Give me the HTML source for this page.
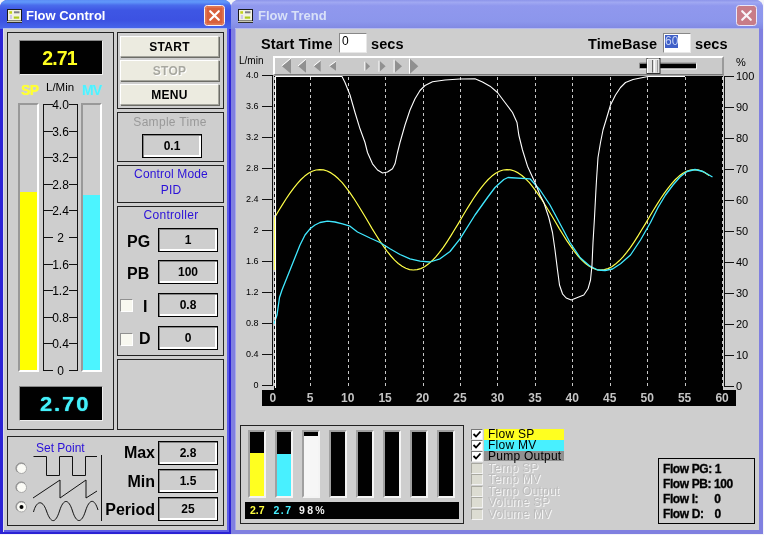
<!DOCTYPE html>
<html><head><meta charset="utf-8"><title>Flow Control</title>
<style>
*{box-sizing:border-box;margin:0;padding:0}
html,body{width:764px;height:535px;overflow:hidden;background:#f4f4f8;font-family:"Liberation Sans",sans-serif;font-size:13px;color:#000}
.a{position:absolute}
.win{position:absolute;top:0;height:535px;background:#cecece;border-radius:8px 8px 0 0}
#w1{left:0;width:231px;height:534px;border:3px solid #2b22d4;border-top:none;border-right-width:2px;border-bottom-width:2px;box-shadow:inset 1px 0 0 #dcdcec,inset -2px -2px 0 #5c5ce6}
#w2{left:231px;width:532px;height:534px;border:4px solid #8080e0;border-top:none;box-shadow:inset 1px 0 0 #a8a8ec}
.tb{position:absolute;left:0;top:0;height:29px}
#t1{width:231px;background:linear-gradient(#5c8ef6 0,#6098fa 7%,#4a6cec 18%,#3e56e4 36%,#3c52e2 70%,#4460e8 90%,#4868ec 100%);border-radius:7px 7px 0 0}
#t2{left:231px;width:532px;background:linear-gradient(#8c94ea 0,#a0a8f2 8%,#9098ee 20%,#8c96ec 75%,#8088e2 100%);border-radius:7px 7px 0 0}
.ttl{position:absolute;top:8px;font-weight:bold;font-size:13px;color:#fff;letter-spacing:0}
.panel{position:absolute;border:1px solid #222;background:#cecece}
.btn{position:absolute;left:120px;width:99px;height:21px;background:#ecebe0;border:1px solid #fff;border-right-color:#a4a49c;border-bottom-color:#a4a49c;box-shadow:1px 1px 0 #6c6c66;font-weight:bold;font-size:12px;text-align:center;line-height:21px;letter-spacing:0.3px}
.fld{position:absolute;height:24px;border:1px solid #000;box-shadow:inset 1px 1px 0 #858585,inset -2px -2px 0 #fff;background:#cecece;font-weight:bold;font-size:12px;text-align:center;line-height:22px}
.blue{color:#2a10d8}
.lbl{position:absolute;font-size:16px;font-weight:bold;line-height:20px}
.cb{position:absolute;width:13px;height:13px;background:#f8f8f0;border:1px solid #909090;border-right-color:#fff;border-bottom-color:#fff}
.tick{position:absolute;font-size:12px;line-height:12px}
.bar{position:absolute;top:430px;width:18px;height:68px;border:2px solid #f4f4f4;border-top-color:#a0a0a0;border-left-color:#a0a0a0;background:#000}
.ck{position:absolute;left:471px;width:12px;height:11px;background:#fff;border:1px solid #777;border-right-color:#eee;border-bottom-color:#eee}
.ckd{position:absolute;left:471px;width:12px;height:11px;background:#dcdcd2;border:1px solid #a8a8a0;border-right-color:#f2f2f2;border-bottom-color:#f2f2f2}
.cl{position:absolute;left:484px;font-size:12px;line-height:11px;height:11px;padding-left:4px;letter-spacing:0.25px}
.cld{color:#bdbdbd;text-shadow:1px 1px 0 #f6f6f6}
.info{position:absolute;left:663px;font-weight:bold;font-size:12px;line-height:13px;letter-spacing:-0.4px;-webkit-text-stroke:0.3px #000}
#root{position:absolute;left:0;top:0;width:764px;height:535px;will-change:transform;opacity:0.999}
</style></head><body><div id="root">
<div class="win" id="w1"></div>
<div class="win" id="w2"></div>
<div class="tb" id="t1"></div>
<div class="tb" id="t2"></div>

<!-- title 1 -->
<svg class="a" style="left:7px;top:9px" width="15" height="14" viewBox="0 0 15 14"><rect x="0.5" y="0.5" width="14" height="11.500" fill="#f2f2e2" stroke="#181818"/><rect x="2.300" y="2.200" width="2.700" height="2.500" fill="#c4d418"/><rect x="7" y="2.300" width="5.500" height="2" fill="#808088"/><rect x="2.800" y="6" width="2.200" height="4" fill="#cfc8ea"/><rect x="6.800" y="7.500" width="5.400" height="2.200" fill="#aecb1c"/><rect x="0" y="12" width="15" height="1.500" fill="#c8c8b4"/><rect x="0" y="13" width="15" height="1" fill="#303030"/></svg>
<div class="ttl" style="left:26px">Flow Control</div>
<svg class="a" style="left:204px;top:5px" width="21" height="21" viewBox="0 0 22 22"><rect x="0.5" y="0.5" width="21" height="21" rx="3" fill="#d8603c" stroke="#fff"/><rect x="2" y="2" width="18" height="18" rx="2" fill="none" stroke="#e88a68" stroke-width="1"/><path d="M6.500 6.500 L15.500 15.500 M15.500 6.500 L6.500 15.500" stroke="#fff" stroke-width="2.300" stroke-linecap="round"/></svg>
<div class="a" style="left:3px;top:28px;width:224px;height:1px;background:#b4c0f0"></div><div class="a" style="left:235px;top:28px;width:524px;height:1px;background:#b8bcec"></div>
<!-- title 2 -->
<svg class="a" style="left:238px;top:9px" width="15" height="14" viewBox="0 0 15 14"><rect x="0.5" y="0.5" width="14" height="11.500" fill="#f2f2e2" stroke="#181818"/><rect x="2.300" y="2.200" width="2.700" height="2.500" fill="#c4d418"/><rect x="7" y="2.300" width="5.500" height="2" fill="#808088"/><rect x="2.800" y="6" width="2.200" height="4" fill="#cfc8ea"/><rect x="6.800" y="7.500" width="5.400" height="2.200" fill="#aecb1c"/><rect x="0" y="12" width="15" height="1.500" fill="#c8c8b4"/><rect x="0" y="13" width="15" height="1" fill="#303030"/></svg>
<div class="ttl" style="left:258px;color:#d8e0f8">Flow Trend</div>
<svg class="a" style="left:736px;top:5px" width="21" height="21" viewBox="0 0 22 22"><rect x="0.5" y="0.5" width="21" height="21" rx="3" fill="#c87c88" stroke="#eef"/><path d="M6.500 6.500 L15.500 15.500 M15.500 6.500 L6.500 15.500" stroke="#f8f4f8" stroke-width="2.300" stroke-linecap="round"/></svg>

<!-- LEFT WINDOW -->
<div class="panel" style="left:7px;top:32px;width:107px;height:398px"></div>
<div class="a" style="left:19px;top:40px;width:84px;height:35px;background:#000;border:1px solid #888;border-right-color:#eee;border-bottom-color:#eee"></div>
<div class="a" style="left:17.500px;top:46px;width:84px;text-align:center;font-weight:bold;font-size:19.5px;line-height:24px;color:#ffff20;letter-spacing:-0.9px">2.71</div>
<div class="a" style="left:21px;top:82px;font-weight:bold;font-size:14px;letter-spacing:-0.7px;color:#ffff30;text-shadow:0 0 1px #ffff60">SP</div>
<div class="a" style="left:46px;top:80px;font-size:11.500px;line-height:14px">L/Min</div>
<div class="a" style="left:82px;top:82px;font-weight:bold;font-size:14px;letter-spacing:-0.9px;color:#50f0ff;text-shadow:0 0 1px #80ffff">MV</div>
<!-- gauges -->
<div class="a" style="left:18px;top:103px;width:21px;height:269px;border:2px solid #fff;border-top-color:#999;border-left-color:#999;background:#cecece"></div>
<div class="a" style="left:20px;top:192px;width:17px;height:178px;background:#ffff00"></div>
<div class="a" style="left:81px;top:103px;width:21px;height:269px;border:2px solid #fff;border-top-color:#999;border-left-color:#999;background:#cecece"></div>
<div class="a" style="left:83px;top:195px;width:17px;height:175px;background:#4cf4ff"></div>
<svg class="a" style="left:40px;top:98px" width="42" height="280" viewBox="0 0 42 280">
<g stroke="#111" stroke-width="1" fill="none" shape-rendering="crispEdges">
<path d="M3.5 6 V272 M37.5 6 V272"/>
<path d="M3 6.5 H13 M29 6.5 H38"/><path d="M3 33.5 H13 M29 33.5 H38"/><path d="M3 59.5 H13 M29 59.5 H38"/><path d="M3 86.5 H13 M29 86.5 H38"/><path d="M3 112.5 H13 M29 112.5 H38"/><path d="M3 139.5 H13 M29 139.5 H38"/><path d="M3 166.5 H13 M29 166.5 H38"/><path d="M3 192.5 H13 M29 192.5 H38"/><path d="M3 219.5 H13 M29 219.5 H38"/><path d="M3 245.5 H13 M29 245.5 H38"/><path d="M3 272.5 H13 M29 272.5 H38"/>
</g>
<g font-family="Liberation Sans, sans-serif" font-size="12" fill="#000" text-anchor="middle">
<text x="20.5" y="10.5">4.0</text><text x="20.5" y="37.5">3.6</text><text x="20.5" y="63.5">3.2</text><text x="20.5" y="90.5">2.8</text><text x="20.5" y="116.5">2.4</text><text x="20.5" y="143.5">2</text><text x="20.5" y="170.5">1.6</text><text x="20.5" y="196.5">1.2</text><text x="20.5" y="223.5">0.8</text><text x="20.5" y="249.5">0.4</text><text x="20.5" y="276.5">0</text>
</g>
</svg>
<div class="a" style="left:19px;top:386px;width:84px;height:35px;background:#000;border:1px solid #888;border-right-color:#eee;border-bottom-color:#eee"></div>
<div class="a" style="left:22px;top:392px;width:84px;text-align:center;font-weight:bold;font-size:20px;line-height:24px;color:#44f0fa;letter-spacing:1.700px;transform:scaleX(1.1);text-indent:2px;text-shadow:0 0 1px #44f0fa">2.70</div>

<div class="panel" style="left:117px;top:32px;width:107px;height:77px"></div>
<div class="btn" style="top:36px">START</div>
<div class="btn" style="top:60px;color:#a8a8a0;text-shadow:1px 1px 0 #fff">STOP</div>
<div class="btn" style="top:84px">MENU</div>

<div class="panel" style="left:117px;top:112px;width:107px;height:50px"></div>
<div class="a" style="left:116px;top:115px;width:108px;text-align:center;font-size:12px;line-height:14px;letter-spacing:0.3px;color:#999">Sample Time</div>
<div class="fld" style="left:142px;top:134px;width:60px">0.1</div>

<div class="panel" style="left:117px;top:165px;width:107px;height:38px"></div>
<div class="a blue" style="left:117px;top:166px;width:108px;text-align:center;font-size:12px;line-height:16px;letter-spacing:0.15px">Control Mode<br>PID</div>

<div class="panel" style="left:117px;top:206px;width:107px;height:150px"></div>
<div class="a blue" style="left:117px;top:207px;width:108px;text-align:center;font-size:12px;line-height:16px;letter-spacing:0.3px">Controller</div>
<div class="lbl" style="left:127px;top:232px">PG</div>
<div class="fld" style="left:158px;top:228px;width:60px">1</div>
<div class="lbl" style="left:127px;top:264px">PB</div>
<div class="fld" style="left:158px;top:260px;width:60px">100</div>
<div class="cb" style="left:120px;top:299px"></div>
<div class="lbl" style="left:143px;top:297px">I</div>
<div class="fld" style="left:158px;top:293px;width:60px">0.8</div>
<div class="cb" style="left:120px;top:333px"></div>
<div class="lbl" style="left:139px;top:329px">D</div>
<div class="fld" style="left:158px;top:326px;width:60px">0</div>

<div class="panel" style="left:117px;top:359px;width:107px;height:71px"></div>

<div class="panel" style="left:7px;top:436px;width:217px;height:90px"></div>
<div class="a blue" style="left:36px;top:441px;font-size:12px">Set Point</div>
<svg class="a" style="left:10px;top:450px" width="100" height="76" viewBox="0 0 100 76">
<g fill="#fbfbf6" stroke="#a8a8a8" stroke-width="1"><circle cx="11.5" cy="18.5" r="5"/><circle cx="11.5" cy="37.5" r="5"/><circle cx="11.5" cy="57" r="5"/></g><g fill="none" stroke="#8a8a8a" stroke-width="1"><path d="M7.500 22 A5 5 0 0 1 15 14.500"/><path d="M7.500 41 A5 5 0 0 1 15 33.500"/><path d="M7.500 60.500 A5 5 0 0 1 15 53"/></g>
<circle cx="11.5" cy="57" r="2" fill="#000"/>
<g stroke="#111" stroke-width="1" fill="none">
<path d="M23.5 6.5 H36.5 V25.5 H49.5 V6.5 H62.5 V25.5 H75.5 V6.5 H87"/>
<path d="M23 48 L50 30 V48 L76 30 V48 L87 41"/>
<path d="M23.500 62 C26 52 32 48 36.500 61 S45.500 73.700 49.500 61 S58.500 48.300 62.500 61 S71.500 73.700 75.500 61 S84.500 48.300 88 60"/>
<path d="M91.500 5 V71"/>
</g>
</svg>
<div class="lbl" style="left:90px;top:443px;width:65px;text-align:right;">Max</div>
<div class="fld" style="left:158px;top:441px;width:60px">2.8</div>
<div class="lbl" style="left:90px;top:472px;width:65px;text-align:right;">Min</div>
<div class="fld" style="left:158px;top:469px;width:60px">1.5</div>
<div class="lbl" style="left:90px;top:500px;width:65px;text-align:right;">Period</div>
<div class="fld" style="left:158px;top:497px;width:60px">25</div>

<!-- RIGHT WINDOW -->
<div class="a" style="left:261px;top:36px;font-weight:bold;font-size:14.500px;line-height:16px;letter-spacing:0.1px">Start Time</div>
<div class="a" style="left:339px;top:33px;width:28px;height:20px;background:#fff;border:1px solid #888;border-right-color:#e8e8e8;border-bottom-color:#e8e8e8;font-size:12px;line-height:15px;padding-left:2px">0</div>
<div class="a" style="left:371px;top:36px;font-weight:bold;font-size:14.500px;line-height:16px;letter-spacing:0.1px">secs</div>
<div class="a" style="left:588px;top:36px;font-weight:bold;font-size:14.500px;line-height:16px;letter-spacing:0.1px">TimeBase</div>
<div class="a" style="left:663px;top:33px;width:28px;height:20px;background:#fff;border:1px solid #888;border-right-color:#e8e8e8;border-bottom-color:#e8e8e8;font-size:12px;line-height:13px;padding:1px 0 0 1px"><span style="background:#4060c8;color:#c8d4f4;display:inline-block;height:13px">60</span></div>
<div class="a" style="left:695px;top:36px;font-weight:bold;font-size:14.500px;line-height:16px;letter-spacing:0.1px">secs</div>
<div class="a" style="left:239px;top:55px;font-size:10px;line-height:12px">L/min</div>
<div class="a" style="left:736px;top:56px;font-size:11px;line-height:12px">%</div>
<!-- toolbar -->
<div class="a" style="left:273px;top:56px;width:451px;height:19px;background:#cacaca;border:2px solid #fff;border-right:2px solid #9a9a9a;border-bottom:1px solid #787878"></div>
<svg class="a" style="left:273px;top:56px" width="452" height="20" viewBox="0 0 452 20">
<g fill="#909090"><path d="M9.0 10.2 L18.0 2.7 V17.7 Z"/><path d="M25.3 10.2 L33.0 3.7 V16.7 Z"/><path d="M41.0 10.2 L47.7 4.7 V15.7 Z"/><path d="M56.7 10.2 L63.0 5.7 V14.7 Z"/><path d="M97.1 10.2 L92.3 5.7 V14.7 Z"/><path d="M112.6 10.2 L106.5 4.7 V15.7 Z"/><path d="M129.0 10.2 L121.6 3.7 V16.7 Z"/><path d="M145.3 10.2 L137.0 2.7 V17.7 Z"/></g>
<g stroke="#fff" stroke-width="1" fill="none"><path d="M8.7 9.9 L17.7 2.4"/><path d="M25.0 9.9 L32.7 3.4"/><path d="M40.7 9.9 L47.4 4.4"/><path d="M56.4 9.9 L62.7 5.4"/><path d="M91.8 5.7 V14.7"/><path d="M106.0 4.7 V15.7"/><path d="M121.1 3.7 V16.7"/><path d="M136.5 2.7 V17.7"/></g>
<rect x="367" y="7.500" width="56" height="5" fill="#000"/>
<path d="M366.500 13 H423.500 V7.500" fill="none" stroke="#f4f4f4" stroke-width="1"/><path d="M366.500 12.500 V7 H423" fill="none" stroke="#8c8c8c" stroke-width="1"/>
<rect x="374" y="2.500" width="13" height="15" fill="#dedede" stroke="#333" stroke-width="1"/>
<path d="M379.500 4 V16.500" stroke="#666"/><path d="M381.500 4 V16.500" stroke="#fafafa"/><path d="M384.500 4 V16.500" stroke="#999"/>
<path d="M374.500 17 V3 H386" stroke="#fff" fill="none"/>
</svg>
<!-- chart -->
<svg class="a" style="left:232px;top:0" width="532" height="535" viewBox="232 0 532 535">
<rect x="273" y="75" width="451" height="1" fill="#a8a8a8"/>
<rect x="274" y="76" width="449" height="314" fill="#000"/>
<rect x="262" y="390" width="474" height="16" fill="#000"/>
<g stroke="#c8c8c8" stroke-width="1" stroke-dasharray="3 3" shape-rendering="crispEdges">
<path d="M274.5 77 V388"/><path d="M310.5 77 V388"/><path d="M348.5 77 V388"/><path d="M385.5 77 V388"/><path d="M423.5 77 V388"/><path d="M460.5 77 V388"/><path d="M497.5 77 V388"/><path d="M535.5 77 V388"/><path d="M572.5 77 V388"/><path d="M610.5 77 V388"/><path d="M647.5 77 V388"/><path d="M685.5 77 V388"/><path d="M722.5 77 V388"/>
</g>
<g stroke="#111" stroke-width="1" shape-rendering="crispEdges" fill="none">
<path d="M272.500 75 V386 M724.500 76 V387"/>
<path d="M262 385.5 H272"/><path d="M262 354.5 H272"/><path d="M262 323.5 H272"/><path d="M262 292.5 H272"/><path d="M262 261.5 H272"/><path d="M262 230.5 H272"/><path d="M262 199.5 H272"/><path d="M262 168.5 H272"/><path d="M262 137.5 H272"/><path d="M262 106.5 H272"/><path d="M262 75.5 H272"/><path d="M725 386.5 H734"/><path d="M725 355.5 H734"/><path d="M725 324.5 H734"/><path d="M725 293.5 H734"/><path d="M725 262.5 H734"/><path d="M725 231.5 H734"/><path d="M725 200.5 H734"/><path d="M725 169.5 H734"/><path d="M725 138.5 H734"/><path d="M725 107.5 H734"/><path d="M725 76.5 H734"/>
</g>
<g font-family="Liberation Sans, sans-serif" font-size="10" fill="#000">
<text x="258.5" y="387.9" text-anchor="end" font-size="9">0</text><text x="258.5" y="356.9" text-anchor="end" font-size="9">0.4</text><text x="258.5" y="325.9" text-anchor="end" font-size="9">0.8</text><text x="258.5" y="294.9" text-anchor="end" font-size="9">1.2</text><text x="258.5" y="263.9" text-anchor="end" font-size="9">1.6</text><text x="258.5" y="232.9" text-anchor="end" font-size="9">2</text><text x="258.5" y="201.9" text-anchor="end" font-size="9">2.4</text><text x="258.5" y="170.9" text-anchor="end" font-size="9">2.8</text><text x="258.5" y="139.9" text-anchor="end" font-size="9">3.2</text><text x="258.5" y="108.9" text-anchor="end" font-size="9">3.6</text><text x="258.5" y="77.9" text-anchor="end" font-size="9">4.0</text><text x="736" y="390.0" font-size="11">0</text><text x="736" y="359.0" font-size="11">10</text><text x="736" y="328.0" font-size="11">20</text><text x="736" y="297.0" font-size="11">30</text><text x="736" y="266.0" font-size="11">40</text><text x="736" y="235.0" font-size="11">50</text><text x="736" y="204.0" font-size="11">60</text><text x="736" y="173.0" font-size="11">70</text><text x="736" y="142.0" font-size="11">80</text><text x="736" y="111.0" font-size="11">90</text><text x="736" y="80.0" font-size="11">100</text>
</g>
<g font-family="Liberation Sans, sans-serif" font-size="12" font-weight="bold" fill="#c4c4c4" text-anchor="middle">
<text x="272.8" y="401.5">0</text><text x="310.2" y="401.5">5</text><text x="347.7" y="401.5">10</text><text x="385.1" y="401.5">15</text><text x="422.6" y="401.5">20</text><text x="460.0" y="401.5">25</text><text x="497.4" y="401.5">30</text><text x="534.9" y="401.5">35</text><text x="572.3" y="401.5">40</text><text x="609.8" y="401.5">45</text><text x="647.2" y="401.5">50</text><text x="684.6" y="401.5">55</text><text x="722.1" y="401.5">60</text>
</g>
<g fill="none" stroke-width="1.1" stroke-linejoin="round">
<path stroke="#ffff48" stroke-width="1.2" d="M274.5 270.0 L274.5 219.8 L274.8 217.3 L278.5 211.0 L282.3 204.9 L286.0 199.0 L289.8 193.4 L293.5 188.3 L297.3 183.6 L301.0 179.5 L304.7 176.1 L308.5 173.3 L312.2 171.3 L316.0 170.0 L319.7 169.6 L323.5 169.9 L327.2 171.0 L331.0 172.9 L334.7 175.5 L338.4 178.8 L342.2 182.7 L345.9 187.3 L349.7 192.4 L353.4 197.8 L357.2 203.7 L360.9 209.8 L364.7 216.0 L368.4 222.3 L372.1 228.6 L375.9 234.7 L379.6 240.6 L383.4 246.2 L387.1 251.3 L390.9 256.0 L394.6 260.1 L398.3 263.5 L402.1 266.3 L405.8 268.3 L409.6 269.6 L413.3 270.0 L417.1 269.7 L420.8 268.6 L424.6 266.8 L428.3 264.1 L432.0 260.8 L435.8 256.9 L439.5 252.3 L443.3 247.3 L447.0 241.8 L450.8 235.9 L454.5 229.8 L458.3 223.6 L462.0 217.3 L465.7 211.0 L469.5 204.9 L473.2 199.0 L477.0 193.4 L480.7 188.3 L484.5 183.6 L488.2 179.5 L491.9 176.1 L495.7 173.3 L499.4 171.3 L503.2 170.0 L506.9 169.6 L510.7 169.9 L514.4 171.0 L518.2 172.9 L521.9 175.5 L525.6 178.8 L529.4 182.7 L533.1 187.3 L536.9 192.4 L540.6 197.8 L544.4 203.7 L548.1 209.8 L551.9 216.0 L555.6 222.3 L559.3 228.6 L563.1 234.7 L566.8 240.6 L570.6 246.2 L574.3 251.3 L578.1 256.0 L581.8 260.1 L585.5 263.5 L589.3 266.3 L593.0 268.3 L596.8 269.6 L600.5 270.0 L604.3 269.7 L608.0 268.6 L611.8 266.8 L615.5 264.1 L619.2 260.8 L623.0 256.9 L626.7 252.3 L630.5 247.3 L634.2 241.8 L638.0 235.9 L641.7 229.8 L645.5 223.6 L649.2 217.3 L652.9 211.0 L656.7 204.9 L660.4 199.0 L664.2 193.4 L667.9 188.3 L671.7 183.6 L675.4 179.5 L679.1 176.1 L682.9 173.3 L686.6 171.3 L690.4 170.0 L694.1 169.6 L697.9 169.9 L701.6 171.0 L705.4 172.9 L709.1 175.5"/>
<path stroke="#40e8ff" stroke-width="1.3" d="M274.0 323.8 L277.0 315.0 L279.5 297.5 L282.0 290.0 L285.0 282.5 L290.0 270.0 L295.0 257.5 L300.0 245.0 L305.0 235.0 L310.0 228.8 L315.0 225.0 L320.0 222.5 L327.5 221.2 L335.0 222.0 L342.5 223.8 L350.0 226.2 L357.5 232.0 L370.0 238.0 L380.0 242.5 L390.0 248.8 L400.0 254.5 L410.0 258.8 L420.0 261.2 L430.0 262.0 L440.0 258.8 L450.0 251.5 L460.0 238.8 L475.0 215.0 L487.5 197.5 L495.0 187.5 L503.8 179.5 L508.0 177.5 L530.0 178.8 L540.0 190.0 L550.0 205.0 L560.0 223.8 L570.0 242.5 L580.0 257.5 L590.0 266.2 L597.5 270.0 L605.0 270.5 L612.5 269.0 L620.5 263.8 L630.5 255.0 L640.5 240.0 L650.5 222.5 L658.0 207.5 L665.5 195.0 L673.0 185.0 L680.0 177.0 L687.0 171.5 L695.0 169.5 L703.0 171.5 L712.5 177.0"/>
<path stroke="#ffffff" d="M275.5 388.0 L275.5 76.5 L342.0 76.5 L345.0 82.5 L350.0 95.0 L355.0 112.5 L360.0 128.8 L365.0 142.5 L367.5 152.5 L372.5 163.8 L377.5 170.0 L382.5 173.0 L387.5 172.0 L392.5 168.8 L395.0 163.8 L397.5 152.5 L400.0 142.5 L405.0 125.0 L410.0 110.0 L415.0 98.8 L420.0 90.5 L425.0 85.5 L432.5 81.8 L445.0 80.0 L460.0 79.0 L475.0 78.8 L482.5 82.0 L490.0 86.2 L497.5 92.5 L505.0 102.5 L512.5 112.5 L517.0 122.5 L518.8 135.0 L522.5 150.0 L527.5 166.2 L535.0 182.5 L540.0 195.0 L543.8 202.5 L548.8 217.5 L552.5 232.5 L555.0 250.0 L557.5 270.0 L559.5 285.0 L562.5 293.8 L566.2 298.0 L571.2 300.0 L577.5 297.5 L583.8 295.0 L588.0 288.8 L590.5 280.0 L592.0 265.0 L593.0 242.5 L594.5 217.5 L595.8 192.5 L596.5 180.0 L598.0 157.5 L600.5 142.5 L603.0 130.0 L606.8 117.5 L610.5 105.0 L615.5 95.0 L620.5 87.5 L625.5 82.5 L633.0 79.5 L640.5 78.0 L648.0 76.5 L685.0 76.5"/>
</g>
</svg>

<!-- bars panel -->
<div class="panel" style="left:240px;top:425px;width:224px;height:99px"></div>
<div class="bar" style="left:248px"></div><div class="bar" style="left:275px"></div><div class="bar" style="left:302px"></div><div class="bar" style="left:329px"></div><div class="bar" style="left:356px"></div><div class="bar" style="left:383px"></div><div class="bar" style="left:410px"></div><div class="bar" style="left:437px"></div>
<div class="a" style="left:248px;top:449px;width:19px;height:47px;"></div>
<div class="a" style="left:250px;top:453px;width:14px;height:43px;background:#ffff20"></div>
<div class="a" style="left:277px;top:454px;width:14px;height:42px;background:#48f0ff"></div>
<div class="a" style="left:304px;top:436px;width:14px;height:60px;background:#f6f6f6"></div>
<div class="a" style="left:245px;top:502px;width:214px;height:17px;background:#000"></div>
<div class="a" style="left:250px;top:504px;font-weight:bold;font-size:10.500px;line-height:13px;color:#ffff40">2.7</div>
<div class="a" style="left:273.500px;top:504px;font-weight:bold;font-size:10.500px;line-height:13px;letter-spacing:1.500px;color:#48f0ff">2.7</div>
<div class="a" style="left:299px;top:504px;font-weight:bold;font-size:10.500px;line-height:13px;color:#f0f0f0;letter-spacing:2.300px">98%</div>

<div class="ck" style="top:429px"></div><svg class="a" style="left:472px;top:430px" width="10" height="9" viewBox="0 0 10 9"><path d="M1.500 4 L4 6.500 L8.500 1.500" stroke="#000" stroke-width="1.8" fill="none"/></svg><div class="cl" style="top:429px;width:80px;background:#ffff20;height:11px">Flow SP</div><div class="ck" style="top:440px"></div><svg class="a" style="left:472px;top:441px" width="10" height="9" viewBox="0 0 10 9"><path d="M1.500 4 L4 6.500 L8.500 1.500" stroke="#000" stroke-width="1.8" fill="none"/></svg><div class="cl" style="top:440px;width:80px;background:#48f0ff;height:11px">Flow MV</div><div class="ck" style="top:451px"></div><svg class="a" style="left:472px;top:452px" width="10" height="9" viewBox="0 0 10 9"><path d="M1.500 4 L4 6.500 L8.500 1.500" stroke="#000" stroke-width="1.8" fill="none"/></svg><div class="cl" style="top:451px;width:80px;background:#909090;height:10px">Pump Output</div><div class="ckd" style="top:463px"></div><div class="cl cld" style="top:463px">Temp SP</div><div class="ckd" style="top:474px"></div><div class="cl cld" style="top:474px">Temp MV</div><div class="ckd" style="top:486px"></div><div class="cl cld" style="top:486px">Temp Output</div><div class="ckd" style="top:497px"></div><div class="cl cld" style="top:497px">Volume SP</div><div class="ckd" style="top:509px"></div><div class="cl cld" style="top:509px">Volume MV</div>

<div class="panel" style="left:658px;top:458px;width:97px;height:66px;border-color:#000"></div>
<div class="info" style="top:463px">Flow PG: 1</div>
<div class="info" style="top:478px">Flow PB: 100</div>
<div class="info" style="top:493px">Flow I:<span style="display:inline-block;width:16px"></span>0</div>
<div class="info" style="top:508px">Flow D:<span style="display:inline-block;width:11px"></span>0</div>
</div></body></html>
